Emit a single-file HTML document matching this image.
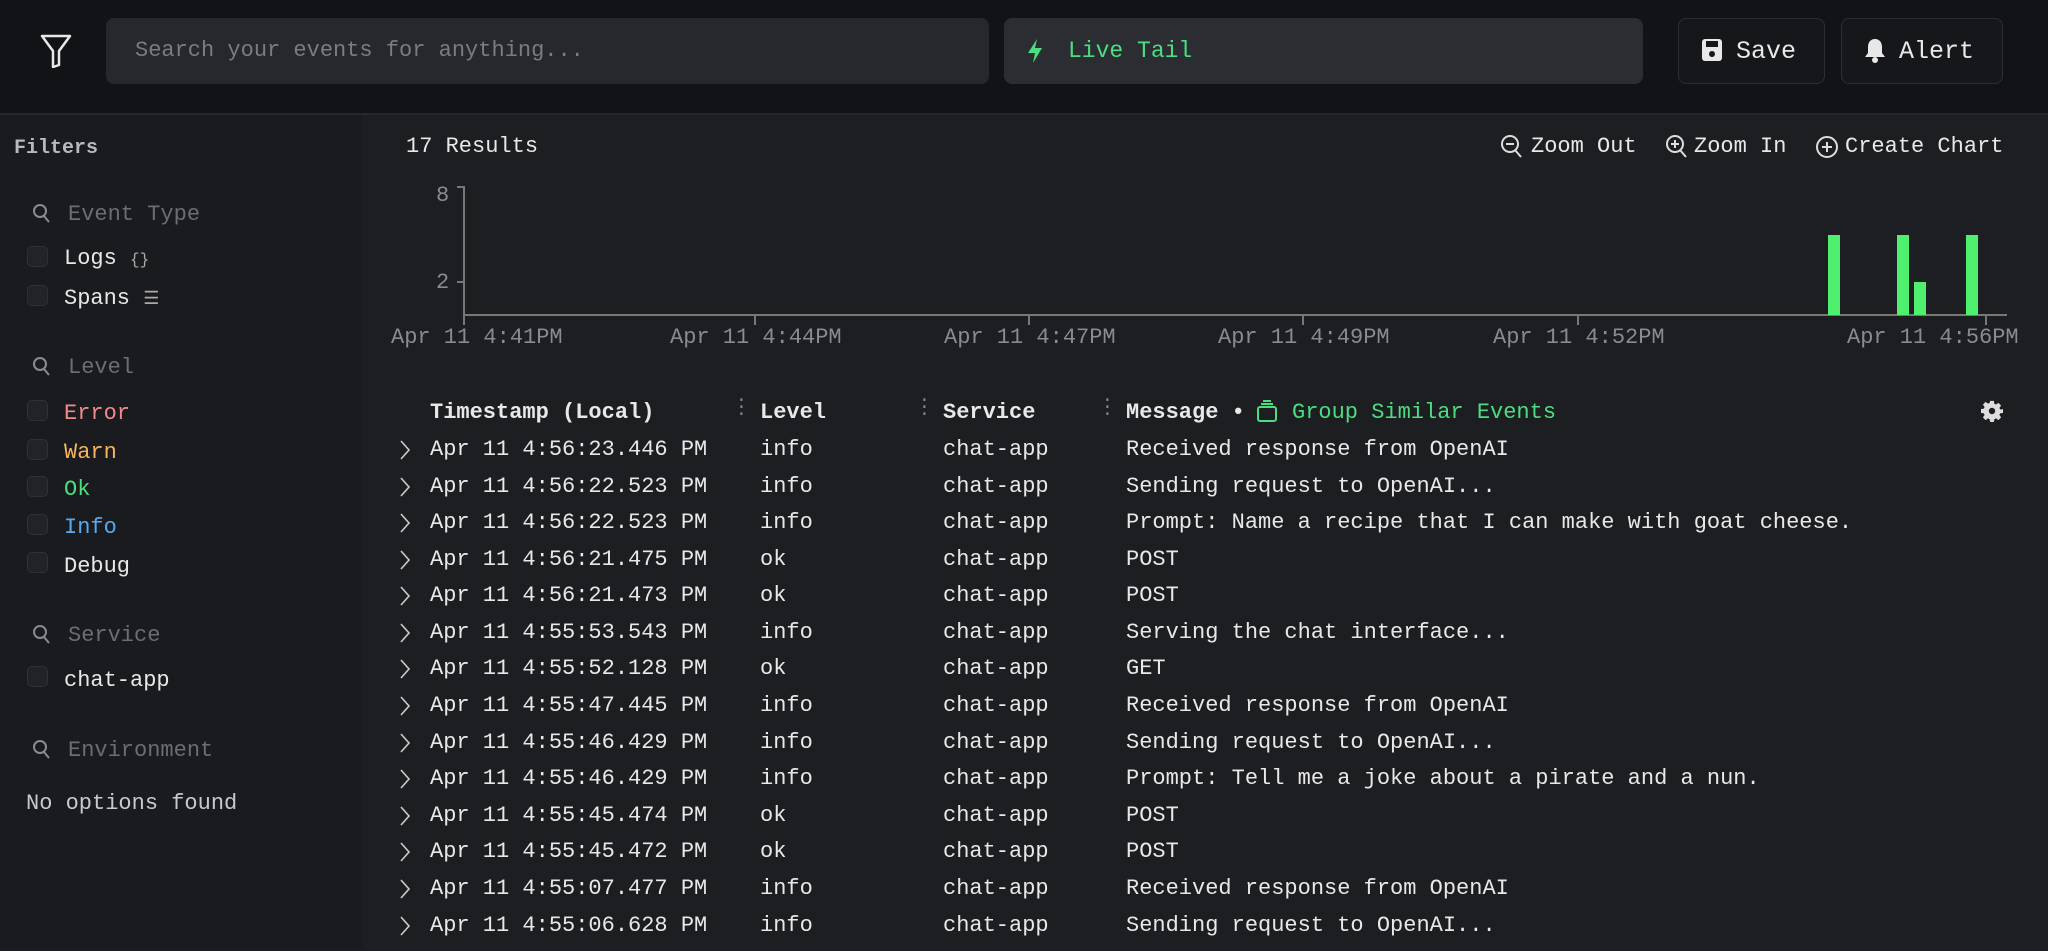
<!DOCTYPE html>
<html><head><meta charset="utf-8"><style>
*{margin:0;padding:0;box-sizing:border-box}
body{width:2048px;height:948px;overflow:hidden;background:#1d1e22;font-family:"Liberation Mono",monospace;color:#e8e8e8;font-size:22px;position:relative}
.a{position:absolute;white-space:pre;line-height:1}
#hdr{position:absolute;left:0;top:0;width:2048px;height:115px;background:#111317;border-bottom:2px solid #25272c}
#side{position:absolute;left:0;top:115px;width:362px;height:833px;background:#1a1b1f}
.box{position:absolute;border-radius:8px}
.cb{position:absolute;width:21px;height:21px;border:1px solid #2e3036;background:#212328;border-radius:5px}
.gray{color:#6b6d72}
.ax{color:#8a8b8f;font-size:22px}
.b{font-weight:bold}
.r{position:absolute;left:0;width:2048px;height:37px}.r span{position:absolute;top:1px;white-space:pre;line-height:1}.r svg{position:absolute;left:398px;top:1px}
</style></head><body>
<div id="hdr"></div>
<svg class="a" style="left:40px;top:34px" width="32" height="34" viewBox="0 0 32 34"><path d="M2 2H30L19 17V31L13 33V17Z" fill="none" stroke="#e8e8e8" stroke-width="2.5" stroke-linejoin="round"/></svg>
<div class="box" style="left:106px;top:18px;width:883px;height:66px;background:#26282d"></div>
<div class="a gray" style="left:135px;top:40px;font-size:22px;color:#7a7c80">Search your events for anything...</div>
<div class="box" style="left:1004px;top:18px;width:639px;height:66px;background:#2b2d32"></div>
<svg class="a" style="left:1026px;top:38px" width="18" height="26" viewBox="0 0 18 26"><path d="M11 1L2 15H9L7 25L16 10H9Z" fill="#4ade80"/></svg>
<div class="a" style="left:1068px;top:40px;font-size:23px;color:#4ade80">Live Tail</div>
<div class="box" style="left:1678px;top:18px;width:147px;height:66px;border:1px solid #2c2e33;background:#15171b"></div>
<svg class="a" style="left:1701px;top:38px" width="22" height="24" viewBox="0 0 22 24"><rect x="1" y="1" width="20" height="22" rx="3" fill="#e8e8e8"/><rect x="5" y="3" width="12" height="6" fill="#15171b"/><circle cx="11" cy="16" r="3" fill="#15171b"/></svg>
<div class="a" style="left:1736px;top:39px;font-size:25px">Save</div>
<div class="box" style="left:1841px;top:18px;width:162px;height:66px;border:1px solid #2c2e33;background:#15171b"></div>
<svg class="a" style="left:1864px;top:38px" width="22" height="26" viewBox="0 0 22 26"><path d="M11 1C6 1 4 5 4 9V15L1 19H21L18 15V9C18 5 16 1 11 1Z" fill="#e8e8e8"/><circle cx="11" cy="22" r="3" fill="#e8e8e8"/></svg>
<div class="a" style="left:1899px;top:39px;font-size:25px">Alert</div>

<div id="side"></div>
<div class="a b" style="left:14px;top:139px;font-size:20px;color:#b8b9bc">Filters</div>
<svg class="a" style="left:32px;top:203px" width="20" height="22" viewBox="0 0 20 22"><circle cx="8" cy="8" r="6" fill="none" stroke="#8a8b8f" stroke-width="2"/><path d="M12 13L17 19" stroke="#8a8b8f" stroke-width="2"/></svg>
<div class="a gray" style="left:68px;top:204px">Event Type</div>
<div class="cb" style="left:27px;top:246px"></div><div class="a" style="left:64px;top:248px">Logs <span style="font-size:16px;color:#aaa">{}</span></div>
<div class="cb" style="left:27px;top:285px"></div><div class="a" style="left:64px;top:288px">Spans <span style="font-size:18px;color:#aaa">☰</span></div>
<svg class="a" style="left:32px;top:356px" width="20" height="22" viewBox="0 0 20 22"><circle cx="8" cy="8" r="6" fill="none" stroke="#8a8b8f" stroke-width="2"/><path d="M12 13L17 19" stroke="#8a8b8f" stroke-width="2"/></svg>
<div class="a gray" style="left:68px;top:357px">Level</div>
<div class="cb" style="left:27px;top:400px"></div><div class="a" style="left:64px;top:403px;color:#f28a8a">Error</div>
<div class="cb" style="left:27px;top:439px"></div><div class="a" style="left:64px;top:442px;color:#f5b45a">Warn</div>
<div class="cb" style="left:27px;top:476px"></div><div class="a" style="left:64px;top:479px;color:#4ade80">Ok</div>
<div class="cb" style="left:27px;top:514px"></div><div class="a" style="left:64px;top:517px;color:#5aa9f0">Info</div>
<div class="cb" style="left:27px;top:552px"></div><div class="a" style="left:64px;top:556px">Debug</div>
<svg class="a" style="left:32px;top:624px" width="20" height="22" viewBox="0 0 20 22"><circle cx="8" cy="8" r="6" fill="none" stroke="#8a8b8f" stroke-width="2"/><path d="M12 13L17 19" stroke="#8a8b8f" stroke-width="2"/></svg>
<div class="a gray" style="left:68px;top:625px">Service</div>
<div class="cb" style="left:27px;top:666px"></div><div class="a" style="left:64px;top:670px">chat-app</div>
<svg class="a" style="left:32px;top:739px" width="20" height="22" viewBox="0 0 20 22"><circle cx="8" cy="8" r="6" fill="none" stroke="#8a8b8f" stroke-width="2"/><path d="M12 13L17 19" stroke="#8a8b8f" stroke-width="2"/></svg>
<div class="a gray" style="left:68px;top:740px">Environment</div>
<div class="a" style="left:26px;top:793px;color:#c8c9cc">No options found</div>

<div class="a" style="left:406px;top:136px">17 Results</div>
<svg class="a" style="left:1500px;top:134px" width="24" height="26" viewBox="0 0 24 26"><circle cx="10" cy="10" r="8" fill="none" stroke="#ddd" stroke-width="2"/><path d="M15 16L21 23M6 10H14" stroke="#ddd" stroke-width="2"/></svg>
<div class="a" style="left:1531px;top:136px">Zoom Out</div>
<svg class="a" style="left:1665px;top:134px" width="24" height="26" viewBox="0 0 24 26"><circle cx="10" cy="10" r="8" fill="none" stroke="#ddd" stroke-width="2"/><path d="M15 16L21 23M6 10H14M10 6V14" stroke="#ddd" stroke-width="2"/></svg>
<div class="a" style="left:1694px;top:136px">Zoom In</div>
<svg class="a" style="left:1815px;top:134px" width="24" height="26" viewBox="0 0 24 26"><circle cx="12" cy="13" r="10" fill="none" stroke="#ddd" stroke-width="2"/><path d="M7 13H17M12 8V18" stroke="#ddd" stroke-width="2"/></svg>
<div class="a" style="left:1845px;top:136px">Create Chart</div>

<svg class="a" style="left:0;top:0" width="2048" height="360">
<g stroke="#777" stroke-width="2" fill="none">
<path d="M457 187H464V315"/><path d="M457 282H464"/>
<path d="M464 315H2007"/>
<path d="M464 315V325M755 315V325M1029 315V325M1303 315V325M1578 315V325M1986 315V325"/>
</g>
<g fill="#4ef06e">
<rect x="1828" y="235" width="12" height="80"/>
<rect x="1897" y="235" width="12" height="80"/>
<rect x="1914" y="282" width="12" height="33"/>
<rect x="1966" y="235" width="12" height="80"/>
</g>
</svg>
<div class="a ax" style="left:436px;top:185px">8</div>
<div class="a ax" style="left:436px;top:272px">2</div>
<div class="a ax" style="left:391px;top:327px">Apr 11 4:41PM</div>
<div class="a ax" style="left:670px;top:327px">Apr 11 4:44PM</div>
<div class="a ax" style="left:944px;top:327px">Apr 11 4:47PM</div>
<div class="a ax" style="left:1218px;top:327px">Apr 11 4:49PM</div>
<div class="a ax" style="left:1493px;top:327px">Apr 11 4:52PM</div>
<div class="a ax" style="left:1847px;top:327px">Apr 11 4:56PM</div>

<div class="a b" style="left:430px;top:402px">Timestamp (Local)</div>
<div class="a b" style="left:760px;top:402px">Level</div>
<div class="a b" style="left:943px;top:402px">Service</div>
<div class="a b" style="left:1126px;top:402px">Message •</div>
<div class="a gray" style="left:736px;top:398px;color:#888;font-size:18px;line-height:7px">·<br>·<br>·</div>
<div class="a gray" style="left:919px;top:398px;color:#888;font-size:18px;line-height:7px">·<br>·<br>·</div>
<div class="a gray" style="left:1102px;top:398px;color:#888;font-size:18px;line-height:7px">·<br>·<br>·</div>
<svg class="a" style="left:1256px;top:399px" width="22" height="24" viewBox="0 0 22 24"><rect x="2" y="8" width="18" height="14" rx="2" fill="none" stroke="#4ade80" stroke-width="2"/><path d="M5 5H17M7 2H15" stroke="#4ade80" stroke-width="2"/></svg>
<div class="a" style="left:1292px;top:402px;color:#4ade80">Group Similar Events</div>
<svg class="a" style="left:1981px;top:400px" width="22" height="22" viewBox="0 0 24 24"><path fill="#ddd" fill-rule="evenodd" d="M10 1h4l.6 3.1 1.8.8 2.6-1.8 2.9 2.9-1.8 2.6.8 1.8L24 10v4l-3.1.6-.8 1.8 1.8 2.6-2.9 2.9-2.6-1.8-1.8.8L14 24h-4l-.6-3.1-1.8-.8-2.6 1.8-2.9-2.9 1.8-2.6-.8-1.8L0 14v-4l3.1-.6.8-1.8L2.1 5l2.9-2.9 2.6 1.8 1.8-.8zM12 8.5a3.5 3.5 0 1 0 0 7 3.5 3.5 0 0 0 0-7z"/></svg>

<div class="r" style="top:438px"><svg width="14" height="22" viewBox="0 0 14 22"><path d="M3 2L11 11L3 20" fill="none" stroke="#ccc" stroke-width="1.6"/></svg><span style="left:430px">Apr 11 4:56:23.446 PM</span><span style="left:760px">info</span><span style="left:943px">chat-app</span><span style="left:1126px">Received response from OpenAI</span></div>
<div class="r" style="top:475px"><svg width="14" height="22" viewBox="0 0 14 22"><path d="M3 2L11 11L3 20" fill="none" stroke="#ccc" stroke-width="1.6"/></svg><span style="left:430px">Apr 11 4:56:22.523 PM</span><span style="left:760px">info</span><span style="left:943px">chat-app</span><span style="left:1126px">Sending request to OpenAI...</span></div>
<div class="r" style="top:511px"><svg width="14" height="22" viewBox="0 0 14 22"><path d="M3 2L11 11L3 20" fill="none" stroke="#ccc" stroke-width="1.6"/></svg><span style="left:430px">Apr 11 4:56:22.523 PM</span><span style="left:760px">info</span><span style="left:943px">chat-app</span><span style="left:1126px">Prompt: Name a recipe that I can make with goat cheese.</span></div>
<div class="r" style="top:548px"><svg width="14" height="22" viewBox="0 0 14 22"><path d="M3 2L11 11L3 20" fill="none" stroke="#ccc" stroke-width="1.6"/></svg><span style="left:430px">Apr 11 4:56:21.475 PM</span><span style="left:760px">ok</span><span style="left:943px">chat-app</span><span style="left:1126px">POST</span></div>
<div class="r" style="top:584px"><svg width="14" height="22" viewBox="0 0 14 22"><path d="M3 2L11 11L3 20" fill="none" stroke="#ccc" stroke-width="1.6"/></svg><span style="left:430px">Apr 11 4:56:21.473 PM</span><span style="left:760px">ok</span><span style="left:943px">chat-app</span><span style="left:1126px">POST</span></div>
<div class="r" style="top:621px"><svg width="14" height="22" viewBox="0 0 14 22"><path d="M3 2L11 11L3 20" fill="none" stroke="#ccc" stroke-width="1.6"/></svg><span style="left:430px">Apr 11 4:55:53.543 PM</span><span style="left:760px">info</span><span style="left:943px">chat-app</span><span style="left:1126px">Serving the chat interface...</span></div>
<div class="r" style="top:657px"><svg width="14" height="22" viewBox="0 0 14 22"><path d="M3 2L11 11L3 20" fill="none" stroke="#ccc" stroke-width="1.6"/></svg><span style="left:430px">Apr 11 4:55:52.128 PM</span><span style="left:760px">ok</span><span style="left:943px">chat-app</span><span style="left:1126px">GET</span></div>
<div class="r" style="top:694px"><svg width="14" height="22" viewBox="0 0 14 22"><path d="M3 2L11 11L3 20" fill="none" stroke="#ccc" stroke-width="1.6"/></svg><span style="left:430px">Apr 11 4:55:47.445 PM</span><span style="left:760px">info</span><span style="left:943px">chat-app</span><span style="left:1126px">Received response from OpenAI</span></div>
<div class="r" style="top:731px"><svg width="14" height="22" viewBox="0 0 14 22"><path d="M3 2L11 11L3 20" fill="none" stroke="#ccc" stroke-width="1.6"/></svg><span style="left:430px">Apr 11 4:55:46.429 PM</span><span style="left:760px">info</span><span style="left:943px">chat-app</span><span style="left:1126px">Sending request to OpenAI...</span></div>
<div class="r" style="top:767px"><svg width="14" height="22" viewBox="0 0 14 22"><path d="M3 2L11 11L3 20" fill="none" stroke="#ccc" stroke-width="1.6"/></svg><span style="left:430px">Apr 11 4:55:46.429 PM</span><span style="left:760px">info</span><span style="left:943px">chat-app</span><span style="left:1126px">Prompt: Tell me a joke about a pirate and a nun.</span></div>
<div class="r" style="top:804px"><svg width="14" height="22" viewBox="0 0 14 22"><path d="M3 2L11 11L3 20" fill="none" stroke="#ccc" stroke-width="1.6"/></svg><span style="left:430px">Apr 11 4:55:45.474 PM</span><span style="left:760px">ok</span><span style="left:943px">chat-app</span><span style="left:1126px">POST</span></div>
<div class="r" style="top:840px"><svg width="14" height="22" viewBox="0 0 14 22"><path d="M3 2L11 11L3 20" fill="none" stroke="#ccc" stroke-width="1.6"/></svg><span style="left:430px">Apr 11 4:55:45.472 PM</span><span style="left:760px">ok</span><span style="left:943px">chat-app</span><span style="left:1126px">POST</span></div>
<div class="r" style="top:877px"><svg width="14" height="22" viewBox="0 0 14 22"><path d="M3 2L11 11L3 20" fill="none" stroke="#ccc" stroke-width="1.6"/></svg><span style="left:430px">Apr 11 4:55:07.477 PM</span><span style="left:760px">info</span><span style="left:943px">chat-app</span><span style="left:1126px">Received response from OpenAI</span></div>
<div class="r" style="top:914px"><svg width="14" height="22" viewBox="0 0 14 22"><path d="M3 2L11 11L3 20" fill="none" stroke="#ccc" stroke-width="1.6"/></svg><span style="left:430px">Apr 11 4:55:06.628 PM</span><span style="left:760px">info</span><span style="left:943px">chat-app</span><span style="left:1126px">Sending request to OpenAI...</span></div>
</body></html>
